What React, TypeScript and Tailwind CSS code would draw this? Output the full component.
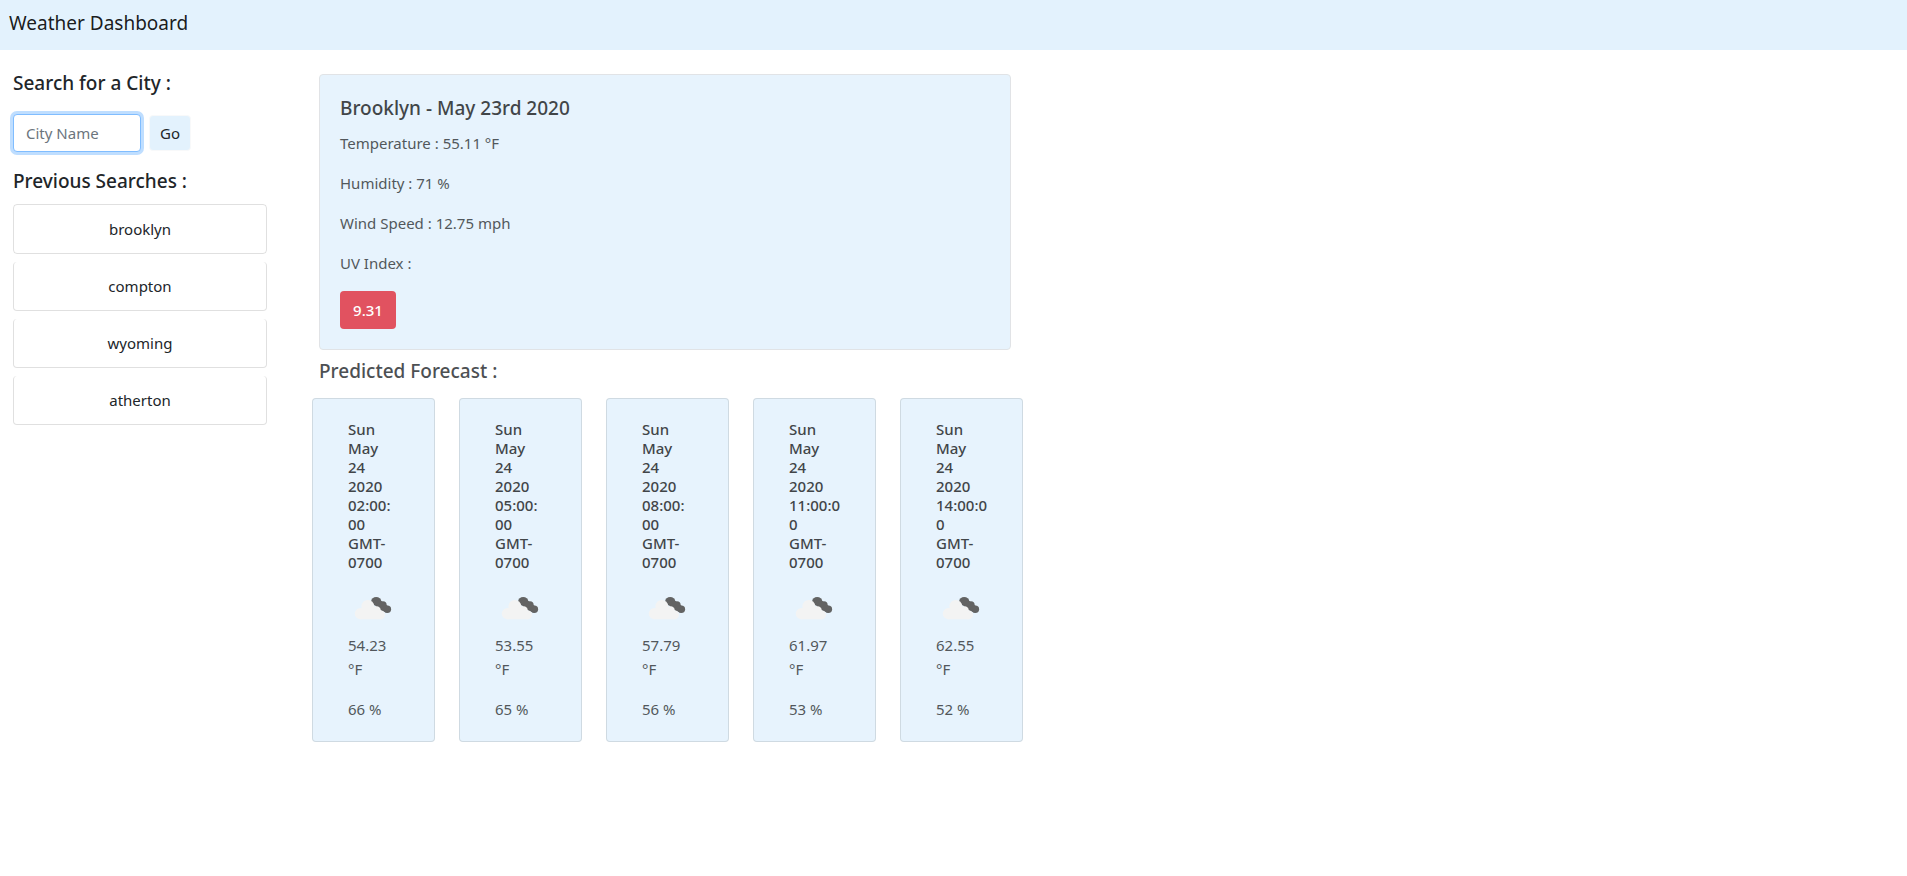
import React from "react";

const searches = ["brooklyn", "compton", "wyoming", "atherton"];

const conditions = ["Temperature : 55.11 °F", "Humidity : 71 %", "Wind Speed : 12.75 mph", "UV Index :"];

type Forecast = { time: string[]; temperature: string; humidity: string };

const forecasts: Forecast[] = [
  { time: ["02:00:", "00"], temperature: "54.23", humidity: "66 %" },
  { time: ["05:00:", "00"], temperature: "53.55", humidity: "65 %" },
  { time: ["08:00:", "00"], temperature: "57.79", humidity: "56 %" },
  { time: ["11:00:0", "0"], temperature: "61.97", humidity: "53 %" },
  { time: ["14:00:0", "0"], temperature: "62.55", humidity: "52 %" },
];

function CloudIcon() {
  return (
    <svg viewBox="0 0 50 50" className="block size-[50px]" role="img" aria-label="Broken clouds">
      <g fill="#484848">
        <ellipse cx="28.2" cy="20.2" rx="5" ry="4.2" />
        <circle cx="35" cy="23.8" r="3.6" />
        <circle cx="39.4" cy="28.2" r="3.7" />
        <path d="M24 20 L31 18 L41 26 L38.5 31.8 L30 28 Z" />
      </g>
      <g fill="#f2f2f2">
        <circle cx="19.8" cy="25.4" r="6.4" />
        <circle cx="12.4" cy="32.6" r="5.6" />
        <circle cx="28.6" cy="29.4" r="4.2" />
        <circle cx="32.6" cy="33.8" r="4.4" />
        <path d="M12 29 L20 22 L29 28 L33 32 V38.2 H12 Z" />
      </g>
    </svg>
  );
}

function ForecastCard({ time, temperature, humidity }: Forecast) {
  const lines = ["Sun", "May", "24", "2020", ...time, "GMT-", "0700"];
  return (
    <article className="min-w-0 flex-1 rounded border border-black/12 bg-[#e3f2fd] pt-[21px] pb-5 pl-[35px] opacity-85">
      <h3 className="mb-2 text-[15px] leading-[19px] font-medium">
        {lines.map((line, i) => (
          <span key={i} className="block">{line}</span>
        ))}
      </h3>
      <div className="pt-px">
        <CloudIcon />
      </div>
      <p className="mt-[2px] mb-4 text-[#343a40]">
        {temperature}
        <br />
        °F
      </p>
      <p className="text-[#343a40]">{humidity}</p>
    </article>
  );
}

export default function App() {
  return (
    <div className="min-h-screen bg-white font-['Noto_Sans','Open_Sans',sans-serif] text-[15px] leading-6 text-[#212529]">
      <header className="flex h-[50px] items-center bg-[#e3f2fd] px-[9px] pb-1">
        <h1 className="text-[19px] text-black/90">Weather Dashboard</h1>
      </header>
      <div className="flex items-start">
        <aside className="w-[267px] shrink-0 pt-[21px] pl-[13px]">
          <h2 className="text-[19px] font-medium">
            <label htmlFor="city">Search for a City :</label>
          </h2>
          <form className="mt-[19px] flex items-center gap-2" onSubmit={(e) => e.preventDefault()}>
            <input
              id="city"
              type="text"
              placeholder="City Name"
              className="h-[38px] w-[128px] rounded border border-[#80bdff] bg-white px-3 ring-3 ring-[#bfdeff] outline-none placeholder:text-[#6c757d]"
            />
            <button type="submit" className="h-9 w-[42px] rounded-sm border border-[#f8f9fa] bg-[#e3f2fd]">
              Go
            </button>
          </form>
          <h2 className="mt-[17px] mb-[11px] text-[19px] font-medium">Previous Searches :</h2>
          <ul className="flex flex-col gap-2">
            {searches.map((city) => (
              <li key={city} className="group">
                <button
                  type="button"
                  className="h-[49px] w-full rounded border border-t-0 border-black/12 group-first:h-[50px] group-first:border-t"
                >
                  {city}
                </button>
              </li>
            ))}
          </ul>
        </aside>
        <main className="ml-[45px] max-w-[711px] flex-1 pt-6">
          <section className="mr-3 ml-[7px] rounded border border-[#dcdfe2] bg-[#e3f2fd] px-5 pt-[21px] pb-5 opacity-85">
            <h2 className="mb-[11px] text-[19px] font-medium">Brooklyn - May 23rd 2020</h2>
            {conditions.map((text) => (
              <p key={text} className="mb-4 text-[#343a40]">{text}</p>
            ))}
            <button type="button" className="h-[38px] w-14 rounded bg-[#dc3545] font-medium text-white">
              9.31
            </button>
          </section>
          <h2 className="mt-[9px] mb-[15px] ml-[7px] text-[19px] font-medium opacity-80">Predicted Forecast :</h2>
          <div className="flex gap-6">
            {forecasts.map((f) => (
              <ForecastCard key={f.temperature} {...f} />
            ))}
          </div>
        </main>
      </div>
    </div>
  );
}
